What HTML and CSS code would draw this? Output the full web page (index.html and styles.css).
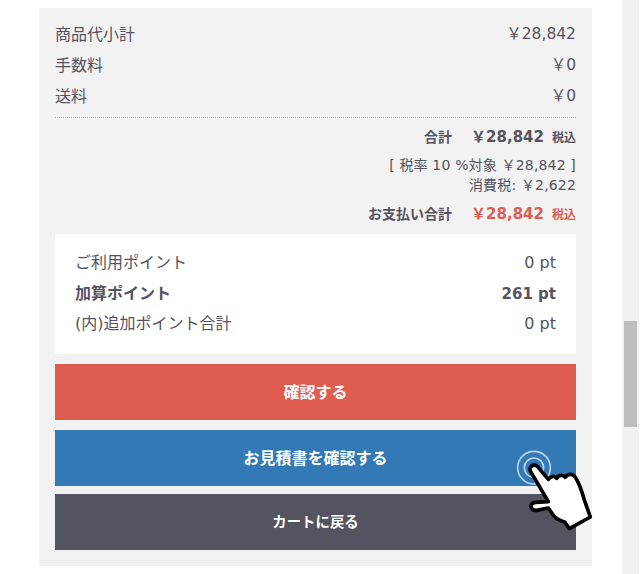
FILE: index.html
```html
<!DOCTYPE html>
<html lang="ja">
<head>
<meta charset="utf-8">
<title>お支払い合計</title>
<link rel="stylesheet" href="styles.css">
</head>
<body>
<main class="page">
  <section class="panel">
    <dl class="rows">
      <div class="row"><dt>商品代小計</dt><dd>￥28,842</dd></div>
      <div class="row"><dt>手数料</dt><dd>￥0</dd></div>
      <div class="row"><dt>送料</dt><dd>￥0</dd></div>
    </dl>
    <div class="totals">
      <div class="total"><span class="total-label">合計</span><span class="total-price">￥28,842</span><span class="total-tax">税込</span></div>
      <div class="tax-note">
        <div>[ 税率 10 %対象 ￥28,842 ]</div>
        <div>消費税: ￥2,622</div>
      </div>
      <div class="total total-pay"><span class="total-label">お支払い合計</span><span class="total-price">￥28,842</span><span class="total-tax">税込</span></div>
    </div>
    <dl class="points">
      <div class="row"><dt>ご利用ポイント</dt><dd>0 pt</dd></div>
      <div class="row row-strong"><dt>加算ポイント</dt><dd>261 pt</dd></div>
      <div class="row"><dt>(内)追加ポイント合計</dt><dd>0 pt</dd></div>
    </dl>
    <a class="btn btn-red">確認する</a>
    <a class="btn btn-blue">お見積書を確認する</a>
    <a class="btn btn-dark">カートに戻る</a>
  </section>
</main>
<svg class="hand" viewBox="90 60 270 285" aria-hidden="true">
  <circle cx="162" cy="143" r="49" fill="none" stroke="#b9d6ec" stroke-width="5"/>
  <circle cx="162" cy="143" r="29" fill="none" stroke="#b9d6ec" stroke-width="5"/>
  <path d="M152 155C146 141 160 129 172 139L205 178C212 168 222 166 230 175C236 163 250 164 256 172C264 160 278 160 286 172C298 190 306 215 313 240L331 291L268 326L254 306C240 302 228 298 220 286L205 264L170 271C150 272 146 250 166 247L205 245Z" fill="#fff" stroke="#000" stroke-width="11" stroke-linejoin="round"/>
</svg>
<div class="scrollbar"><div class="scrollbar-thumb"></div></div>
</body>
</html>
```
FILE: styles.css
```css
* { box-sizing: border-box; }
html, body { margin: 0; padding: 0; height: 574px; overflow: hidden; background: #fff; }
body {
  position: relative;
  font-family: "DejaVu Sans", "Noto Sans CJK JP", sans-serif;
  font-size: 16px;
  color: #54535f;
}
.page { padding: 8px 47px 8px 39px; }
.panel {
  width: 553px;
  height: 558px;
  background: #f2f2f2;
  padding: 10px 16px 16px;
}
dl, dd { margin: 0; }
.row {
  display: flex;
  justify-content: space-between;
  height: 31px;
  line-height: 33px;
}
.rows { padding-bottom: 6px; border-bottom: 1px dotted #b8b8b8; height: 100px; }
.rows dd { font-size: 15.5px; }
.totals { text-align: right; }
.total {
  display: flex;
  justify-content: flex-end;
  align-items: baseline;
  height: 38px;
  line-height: 38px;
  font-weight: 700;
}
.total-label { font-size: 14px; margin-right: 19px; }
.total-price { font-size: 15px; margin-right: 8px; }
.total-tax { font-size: 12px; }
.total-pay .total-price, .total-pay .total-tax { color: #df5c50; }
.tax-note {
  font-size: 14px;
  line-height: 20px;
  letter-spacing: 0.17px;
  margin-top: -1px;
  height: 40px;
}
.points {
  margin-top: 1px;
  height: 120px;
  background: #fff;
  padding: 14px 20px;
}
.points .row { height: 30.5px; line-height: 30.5px; }
.points .row-strong dd { font-size: 15px; }
.row-strong { font-weight: 700; }
.btn {
  display: block;
  height: 56px;
  line-height: 57px;
  text-align: center;
  color: #fff;
  font-weight: 700;
  margin-top: 10px;
}
.btn-red { background: #df5c50; }
.btn-blue { background: #3279b5; }
.btn-dark { background: #545360; margin-top: 8px; font-size: 14.4px; }
.hand {
  position: absolute;
  left: 510px;
  top: 440px;
  width: 90px;
  height: 95px;
}
.scrollbar {
  position: absolute;
  left: 622px;
  top: 0;
  width: 17px;
  height: 574px;
  background: #f1f1f1;
}
.scrollbar-thumb {
  position: absolute;
  left: 2px;
  top: 321px;
  width: 13px;
  height: 106px;
  background: #bdbdbd;
}
```
